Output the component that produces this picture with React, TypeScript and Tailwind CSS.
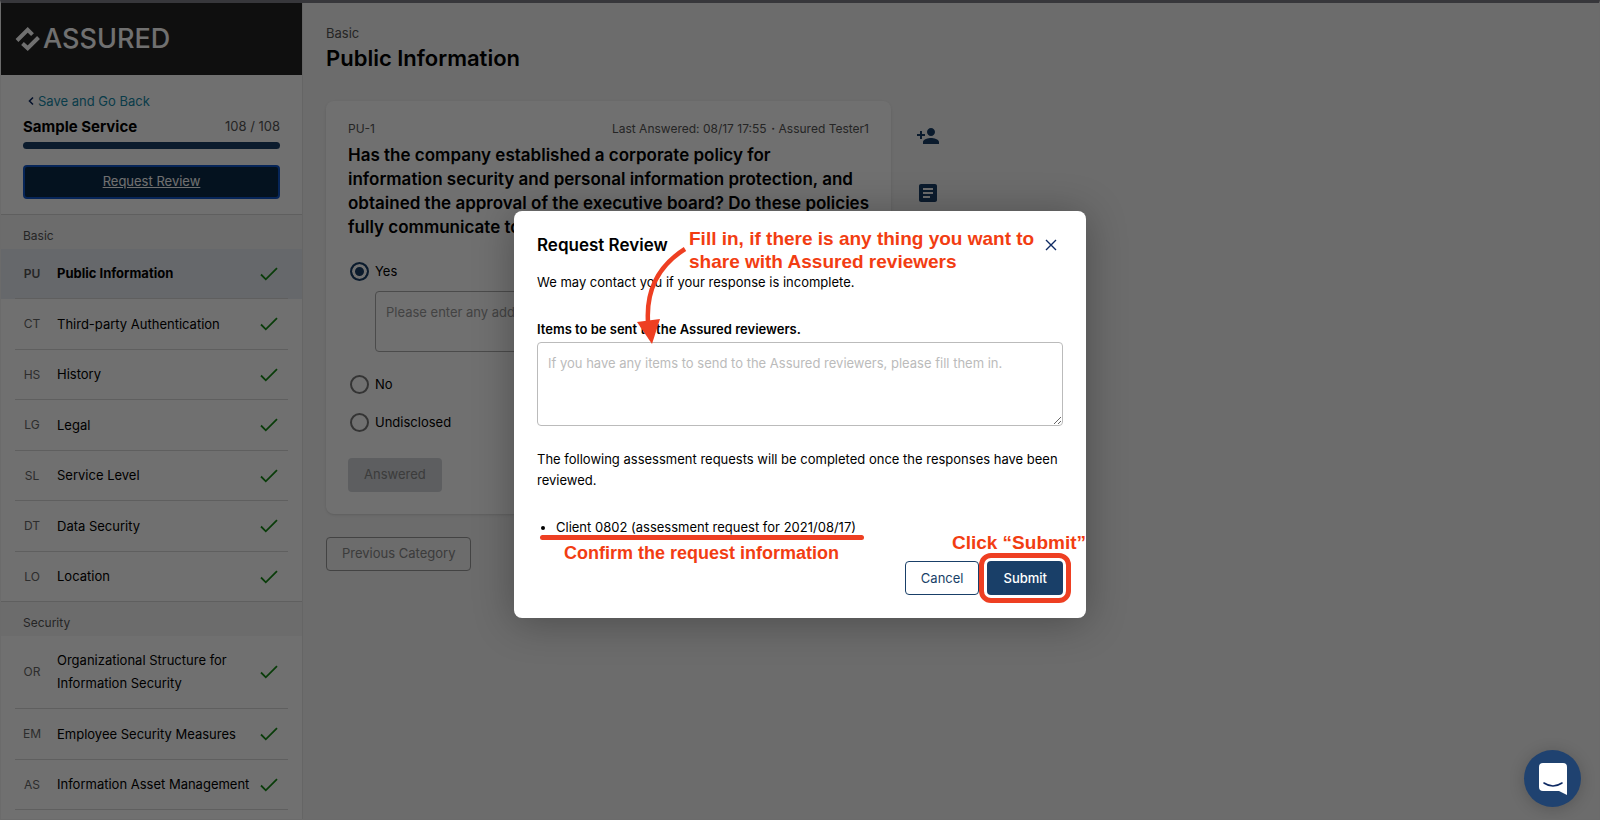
import { useState } from 'react';
import { MdPersonAddAlt1, MdArticle } from 'react-icons/md';

const basicItems = [
  { code: 'PU', name: 'Public Information' },
  { code: 'CT', name: 'Third-party Authentication' },
  { code: 'HS', name: 'History' },
  { code: 'LG', name: 'Legal' },
  { code: 'SL', name: 'Service Level' },
  { code: 'DT', name: 'Data Security' },
  { code: 'LO', name: 'Location' },
];

const securityItems = [
  { code: 'OR', name: 'Organizational Structure for Information Security' },
  { code: 'EM', name: 'Employee Security Measures' },
  { code: 'AS', name: 'Information Asset Management' },
];

export default function App() {
  const [answer, setAnswer] = useState('Yes');

  return (
    <div className="relative flex h-screen overflow-hidden border border-t-[3px] border-[#6b6b6b] border-t-[#37373b] bg-[#f5f5f5] font-['Inter',sans-serif] text-[13px] text-black">
      <Sidebar />
      <main className="flex-1 px-[23px] pt-5">
        <p className="leading-5 text-[#555]">Basic</p>
        <h1 className="text-[22px] font-semibold leading-[30px]">Public Information</h1>

        <div className="mt-7 flex items-start gap-[25px]">
          <section className="w-full max-w-[565px] rounded-lg bg-white px-[22px] pt-[18px] pb-[22px] shadow-sm">
            <div className="flex justify-between text-xs leading-5 text-[#555]">
              <span>PU-1</span>
              <span>Last Answered: 08/17 17:55・Assured Tester1</span>
            </div>
            <h2 className="mt-1 text-[17px] font-semibold leading-6">
              Has the company established a corporate policy for
              <br />
              information security and personal information protection, and obtained the approval of
              the executive board? Do these policies fully communicate to all employees?
            </h2>
            <div className="mt-5">
              <RadioRow label="Yes" checked={answer === 'Yes'} onChange={setAnswer} />
              <div className="mt-2 mb-5 pl-[27px]">
                <textarea
                  aria-label="Additional information"
                  placeholder="Please enter any additional information."
                  className="block h-[61px] w-full resize-none rounded border border-[#aaa] px-2.5 py-2 leading-6 placeholder:text-[#999]"
                />
              </div>
              <RadioRow label="No" checked={answer === 'No'} onChange={setAnswer} />
              <div className="mt-3.5">
                <RadioRow label="Undisclosed" checked={answer === 'Undisclosed'} onChange={setAnswer} />
              </div>
            </div>
            <button className="mt-6 h-[34px] rounded bg-[#d3d6da] px-4 text-[#888]">Answered</button>
          </section>

          <div className="flex flex-col gap-[33px] pt-[23px] text-[#193f68]">
            <button aria-label="Add person">
              <MdPersonAddAlt1 className="size-6 -scale-x-100" />
            </button>
            <button aria-label="Notes">
              <MdArticle className="size-6" />
            </button>
          </div>
        </div>

        <button className="mt-[23px] h-[34px] rounded border border-[#999] px-[15px] text-[#888]">
          Previous Category
        </button>
      </main>

      <div className="absolute inset-0 flex items-center justify-center bg-black/56 pt-[7px]">
        <ReviewDialog />
      </div>

      <button
        aria-label="Open chat"
        className="absolute right-[18px] bottom-3 flex size-[57px] items-center justify-center rounded-full bg-[#1f4270] shadow-[0_2px_16px_rgba(0,0,0,0.2)]"
      >
        <svg viewBox="0 0 28 32" className="h-8 w-7">
          <path d="M4 0H24Q28 0 28 4V32L20 28H4Q0 28 0 24V4Q0 0 4 0Z" fill="#fff" />
          <path d="M5 20Q14 26 23 20" fill="none" stroke="#0e2a63" strokeWidth="1.6" strokeLinecap="round" />
        </svg>
      </button>
    </div>
  );
}

function Sidebar() {
  return (
    <aside className="w-[302px] shrink-0 border-r border-[#e6e6e6] bg-white">
      <div className="flex h-[72px] items-center gap-0.5 bg-[#222] pl-3.5 text-white">
        <svg viewBox="0 0 26 26" className="size-[26px]" fill="none" stroke="currentColor" strokeWidth="4">
          <path d="M2 14.5L12.7 3.8L17.5 8.6" />
          <path d="M7.5 17.5L12.7 22.2L23.5 11.5" />
        </svg>
        <span className="text-[27px] font-medium leading-8">ASSURED</span>
      </div>

      <div className="px-[22px] pt-4 pb-4">
        <a href="#" className="flex items-center gap-[3px] pl-1 leading-5 text-[#1689a8]">
          <svg viewBox="0 0 8 10" className="h-2.5 w-2" fill="none" stroke="#0e2a63" strokeWidth="1.6">
            <path d="M6 1.5L2.5 5L6 8.5" />
          </svg>
          Save and Go Back
        </a>
        <div className="mt-1 flex items-center justify-between">
          <span className="text-[15px] font-bold leading-6">Sample Service</span>
          <span className="text-[#555]">108 / 108</span>
        </div>
        <div className="mt-[3px] h-[7px] rounded-full bg-[#193f68]" />
        <button className="mt-4 h-[34px] w-full rounded border-2 border-[#0e55c8] bg-[#0a2a48] text-white underline">
          Request Review
        </button>
      </div>

      <NavGroup title="Basic" items={basicItems} active="PU" />
      <NavGroup title="Security" items={securityItems} />
    </aside>
  );
}

function NavGroup({ title, items, active }: { title: string; items: { code: string; name: string }[]; active?: string }) {
  return (
    <nav>
      <h3 className="relative -mt-px border-t border-[#d8d8d8] bg-[#f5f5f5] pt-[9px] pb-px pl-[22px] text-xs leading-6 text-[#555]">
        {title}
      </h3>
      <ul>
        {items.map((item) => (
          <li key={item.code} className={`group px-3.5 ${item.code === active ? 'bg-[#e9edf3]' : ''}`}>
            <a
              href="#"
              className="flex min-h-[50px] items-center border-b border-[#d8d8d8] py-[13px] pr-2.5 pl-2 leading-[23px] group-even:min-h-[51px]"
            >
              <span className={`w-[18px] text-center text-xs ${item.code === active ? 'font-semibold text-[#555]' : 'text-[#666]'}`}>
                {item.code}
              </span>
              <span className={`ml-4 flex-1 ${item.code === active ? 'font-bold' : ''}`}>{item.name}</span>
              <svg viewBox="0 0 18 14" className="h-3.5 w-[18px]" fill="none" stroke="#168a16" strokeWidth="1.8">
                <path d="M1 7.5L5.8 12.3L17 1.2" />
              </svg>
            </a>
          </li>
        ))}
      </ul>
    </nav>
  );
}

function RadioRow({ label, checked, onChange }: { label: string; checked: boolean; onChange: (value: string) => void }) {
  return (
    <label className="flex items-center gap-1.5 pl-0.5 leading-6">
      <input
        type="radio"
        name="answer"
        checked={checked}
        onChange={() => onChange(label)}
        className="size-[19px] appearance-none rounded-full border-2 border-[#777] checked:border-[#193f68] checked:bg-[#193f68] checked:shadow-[inset_0_0_0_3px_#fff]"
      />
      {label}
    </label>
  );
}

function ReviewDialog() {
  return (
    <div
      role="dialog"
      aria-labelledby="dialog-title"
      className="relative w-[572px] rounded-lg bg-white p-[23px] leading-[21px] shadow-[0_4px_40px_rgba(0,0,0,0.3)]"
    >
      <div className="flex items-center justify-between">
        <h2 id="dialog-title" className="text-[17px] font-semibold leading-[22px]">Request Review</h2>
        <button aria-label="Close" className="mr-1.5">
          <svg viewBox="0 0 12 12" className="size-3" fill="none" stroke="#0e2a63" strokeWidth="1.4">
            <path d="M1 1L11 11M11 1L1 11" />
          </svg>
        </button>
      </div>
      <p className="mt-4">We may contact you if your response is incomplete.</p>
      <label htmlFor="items" className="mt-[26px] block font-semibold">
        Items to be sent to the Assured reviewers.
      </label>
      <textarea
        id="items"
        placeholder="If you have any items to send to the Assured reviewers, please fill them in."
        className="mt-0.5 block h-[84px] w-full rounded border border-[#bbb] px-2.5 py-2.5 placeholder:text-[#bbb]"
      />
      <p className="mt-[23px]">
        The following assessment requests will be completed once the responses have been reviewed.
      </p>
      <ul className="mt-[26px] list-disc pl-[19px]">
        <li>Client 0802 (assessment request for 2021/08/17)</li>
      </ul>
      <div className="mt-[23px] flex justify-end gap-2">
        <button className="h-[34px] rounded border border-[#193f68] px-[15px] text-[#193f68]">Cancel</button>
        <div className="relative">
          <button className="h-[34px] rounded bg-[#193f68] px-4 font-medium text-white">Submit</button>
          <div className="pointer-events-none absolute -inset-2 rounded-xl border-[5px] border-[#ee3f22]" />
        </div>
      </div>

      {/* Annotations */}
      <div className="pointer-events-none absolute inset-0 font-['Liberation_Sans',sans-serif] font-bold leading-[23px] text-[#f23d12]">
        <p className="absolute top-4 left-[175px] text-[19px] leading-[23px] whitespace-nowrap">
          Fill in, if there is any thing you want to
          <br />
          share with Assured reviewers
        </p>
        <svg viewBox="0 0 60 110" className="absolute top-[29px] left-[116px] h-[110px] w-[60px]">
          <path d="M55 9C28 26 16 50 18 82" fill="none" stroke="#ee3f22" strokeWidth="4.5" />
          <path d="M7 82L30 79L22 104Z" fill="#ee3f22" />
        </svg>
        <div className="absolute top-[324px] left-[26px] h-[5px] w-[324px] rounded-full bg-[#ee3f22]" />
        <p className="absolute top-[331px] left-[50px] text-[18px] leading-[23px] whitespace-nowrap">
          Confirm the request information
        </p>
        <p className="absolute top-[320px] right-0 text-[19px] leading-[23px] whitespace-nowrap">Click “Submit”</p>
      </div>
    </div>
  );
}
